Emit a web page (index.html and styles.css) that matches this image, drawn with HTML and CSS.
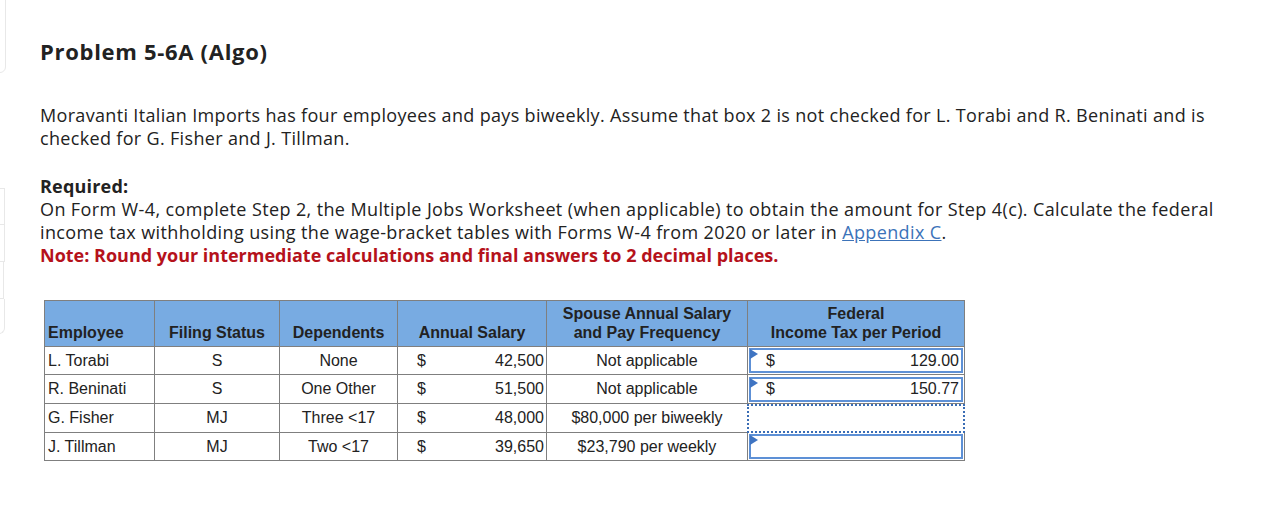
FILE: index.html
```html
<!DOCTYPE html>
<html>
<head>
<meta charset="utf-8">
<link rel="stylesheet" href="styles.css">
</head>
<body>
<div class="edge edge-top"></div>
<div class="edge-group">
  <div class="edge-item"></div>
  <div class="edge-item"></div>
  <div class="edge-item edge-narrow"></div>
  <div class="edge-item edge-last"></div>
</div>
<main class="page">
  <h1 class="title">Problem 5-6A (Algo)</h1>
  <p class="intro">Moravanti Italian Imports has four employees and pays biweekly. Assume that box 2 is not checked for L. Torabi and R. Beninati and is checked for G. Fisher and J. Tillman.</p>
  <div class="req">
    <div class="req-head">Required:</div>
    <div>On Form W-4, complete Step 2, the Multiple Jobs Worksheet (when applicable) to obtain the amount for Step 4(c). Calculate the federal income tax withholding using the wage-bracket tables with Forms W-4 from 2020 or later in <a class="link" href="#">Appendix C</a>.</div>
    <div class="note">Note: Round your intermediate calculations and final answers to 2 decimal places.</div>
  </div>
  <table class="grid">
    <colgroup>
      <col class="c1"><col class="c2"><col class="c3"><col class="c4"><col class="c5"><col class="c6">
    </colgroup>
    <thead>
      <tr class="hrow">
        <th class="left">Employee</th>
        <th>Filing Status</th>
        <th>Dependents</th>
        <th>Annual Salary</th>
        <th>Spouse Annual Salary<br>and Pay Frequency</th>
        <th>Federal<br>Income Tax per Period</th>
      </tr>
    </thead>
    <tbody>
      <tr class="r28">
        <td class="left">L. Torabi</td><td>S</td><td>None</td>
        <td class="money"><span class="cur">$</span><span>42,500</span></td>
        <td>Not applicable</td>
        <td class="inp"><div class="box"><span class="flag"></span><span class="cur">$</span><span>129.00</span></div></td>
      </tr>
      <tr class="r29">
        <td class="left">R. Beninati</td><td>S</td><td>One Other</td>
        <td class="money"><span class="cur">$</span><span>51,500</span></td>
        <td>Not applicable</td>
        <td class="inp"><div class="box"><span class="flag"></span><span class="cur">$</span><span>150.77</span></div></td>
      </tr>
      <tr class="r29">
        <td class="left">G. Fisher</td><td>MJ</td><td>Three &lt;17</td>
        <td class="money"><span class="cur">$</span><span>48,000</span></td>
        <td>$80,000 per biweekly</td>
        <td class="inp"><div class="box focus"></div></td>
      </tr>
      <tr class="r28">
        <td class="left">J. Tillman</td><td>MJ</td><td>Two &lt;17</td>
        <td class="money"><span class="cur">$</span><span>39,650</span></td>
        <td>$23,790 per weekly</td>
        <td class="inp"><div class="box"><span class="flag"></span></div></td>
      </tr>
    </tbody>
  </table>
</main>
</body>
</html>
```

FILE: styles.css
```css
html, body {
  margin: 0;
  padding: 0;
  background: #ffffff;
}
body {
  position: relative;
  width: 1282px;
  height: 517px;
  overflow: hidden;
  font-family: "Open Sans", Lato, sans-serif;
  color: #222222;
}
.edge {
  position: absolute;
  left: -20px;
  width: 24px;
  border: 1px solid #e8e8e8;
  border-radius: 0 0 6px 0;
}
.edge-top {
  top: -2px;
  height: 73px;
}
.edge-group {
  position: absolute;
  left: -20px;
  top: 188px;
  width: 25px;
  display: flex;
  flex-direction: column;
}
.edge-item {
  height: 37px;
  border: 1px solid #e8e8e8;
  border-top: none;
  box-sizing: border-box;
}
.edge-item:first-child {
  border-top: 1px solid #e8e8e8;
}
.edge-narrow {
  width: 24px;
}
.edge-last {
  height: 35px;
  border-radius: 0 0 6px 0;
}
.page {
  padding: 37px 0 0 40px;
}
.title {
  margin: 0;
  font-size: 22px;
  font-weight: 700;
  line-height: 28px;
  letter-spacing: 0.7px;
  color: #222222;
}
.intro {
  margin: 39px 0 0 0;
  width: 1180px;
  font-size: 18px;
  line-height: 23px;
  letter-spacing: 0.33px;
}
.req {
  margin-top: 25px;
  width: 1180px;
  font-size: 18px;
  line-height: 23px;
  letter-spacing: 0.38px;
}
.req-head {
  font-weight: 700;
  letter-spacing: 0.2px;
}
.link {
  color: #3c73b9;
  text-decoration: underline;
}
.note {
  color: #b5121b;
  font-weight: 700;
  letter-spacing: 0;
}
.grid {
  margin: 33px 0 0 4px;
  border-collapse: collapse;
  font-family: "Liberation Sans", Arial, sans-serif;
  font-size: 16px;
  color: #222222;
  table-layout: fixed;
  width: 920px;
}
.c1 { width: 110px; }
.c2 { width: 125px; }
.c3 { width: 118px; }
.c4 { width: 149px; }
.c5 { width: 201px; }
.c6 { width: 217px; }
.grid th, .grid td {
  border: 1px solid #7f7f7f;
  padding: 0;
}
.hrow {
  height: 46px;
  background: #78abe2;
}
.grid th {
  vertical-align: bottom;
  padding: 0 2px 4px;
  font-weight: 700;
  line-height: 19px;
  text-align: center;
}
.grid th.left, .grid td.left {
  text-align: left;
  padding-left: 3px;
}
.grid tbody tr.r28 {
  height: 28px;
}
.grid tbody tr.r29 {
  height: 29px;
}
.grid td {
  text-align: center;
  vertical-align: middle;
  line-height: 18px;
}
.grid td.money {
  padding: 0 2px 0 19px;
  text-align: left;
}
.money span:last-child {
  float: right;
}
.cur {
  display: inline-block;
}
.grid td.inp {
  padding: 1px;
}
.box {
  position: relative;
  height: 25px;
  box-sizing: border-box;
  border: 2px solid #5d90d6;
  display: flex;
  align-items: center;
  justify-content: space-between;
  padding: 0 2px 0 15px;
  background: #ffffff;
}
.box.focus {
  margin: -2px;
  height: 29px;
  border: 2px dotted #3a6db5;
}
.flag {
  position: absolute;
  left: -1px;
  top: -1px;
  width: 0;
  height: 0;
  border-top: 5px solid transparent;
  border-bottom: 5px solid transparent;
  border-left: 8px solid #3f74c2;
}
```
